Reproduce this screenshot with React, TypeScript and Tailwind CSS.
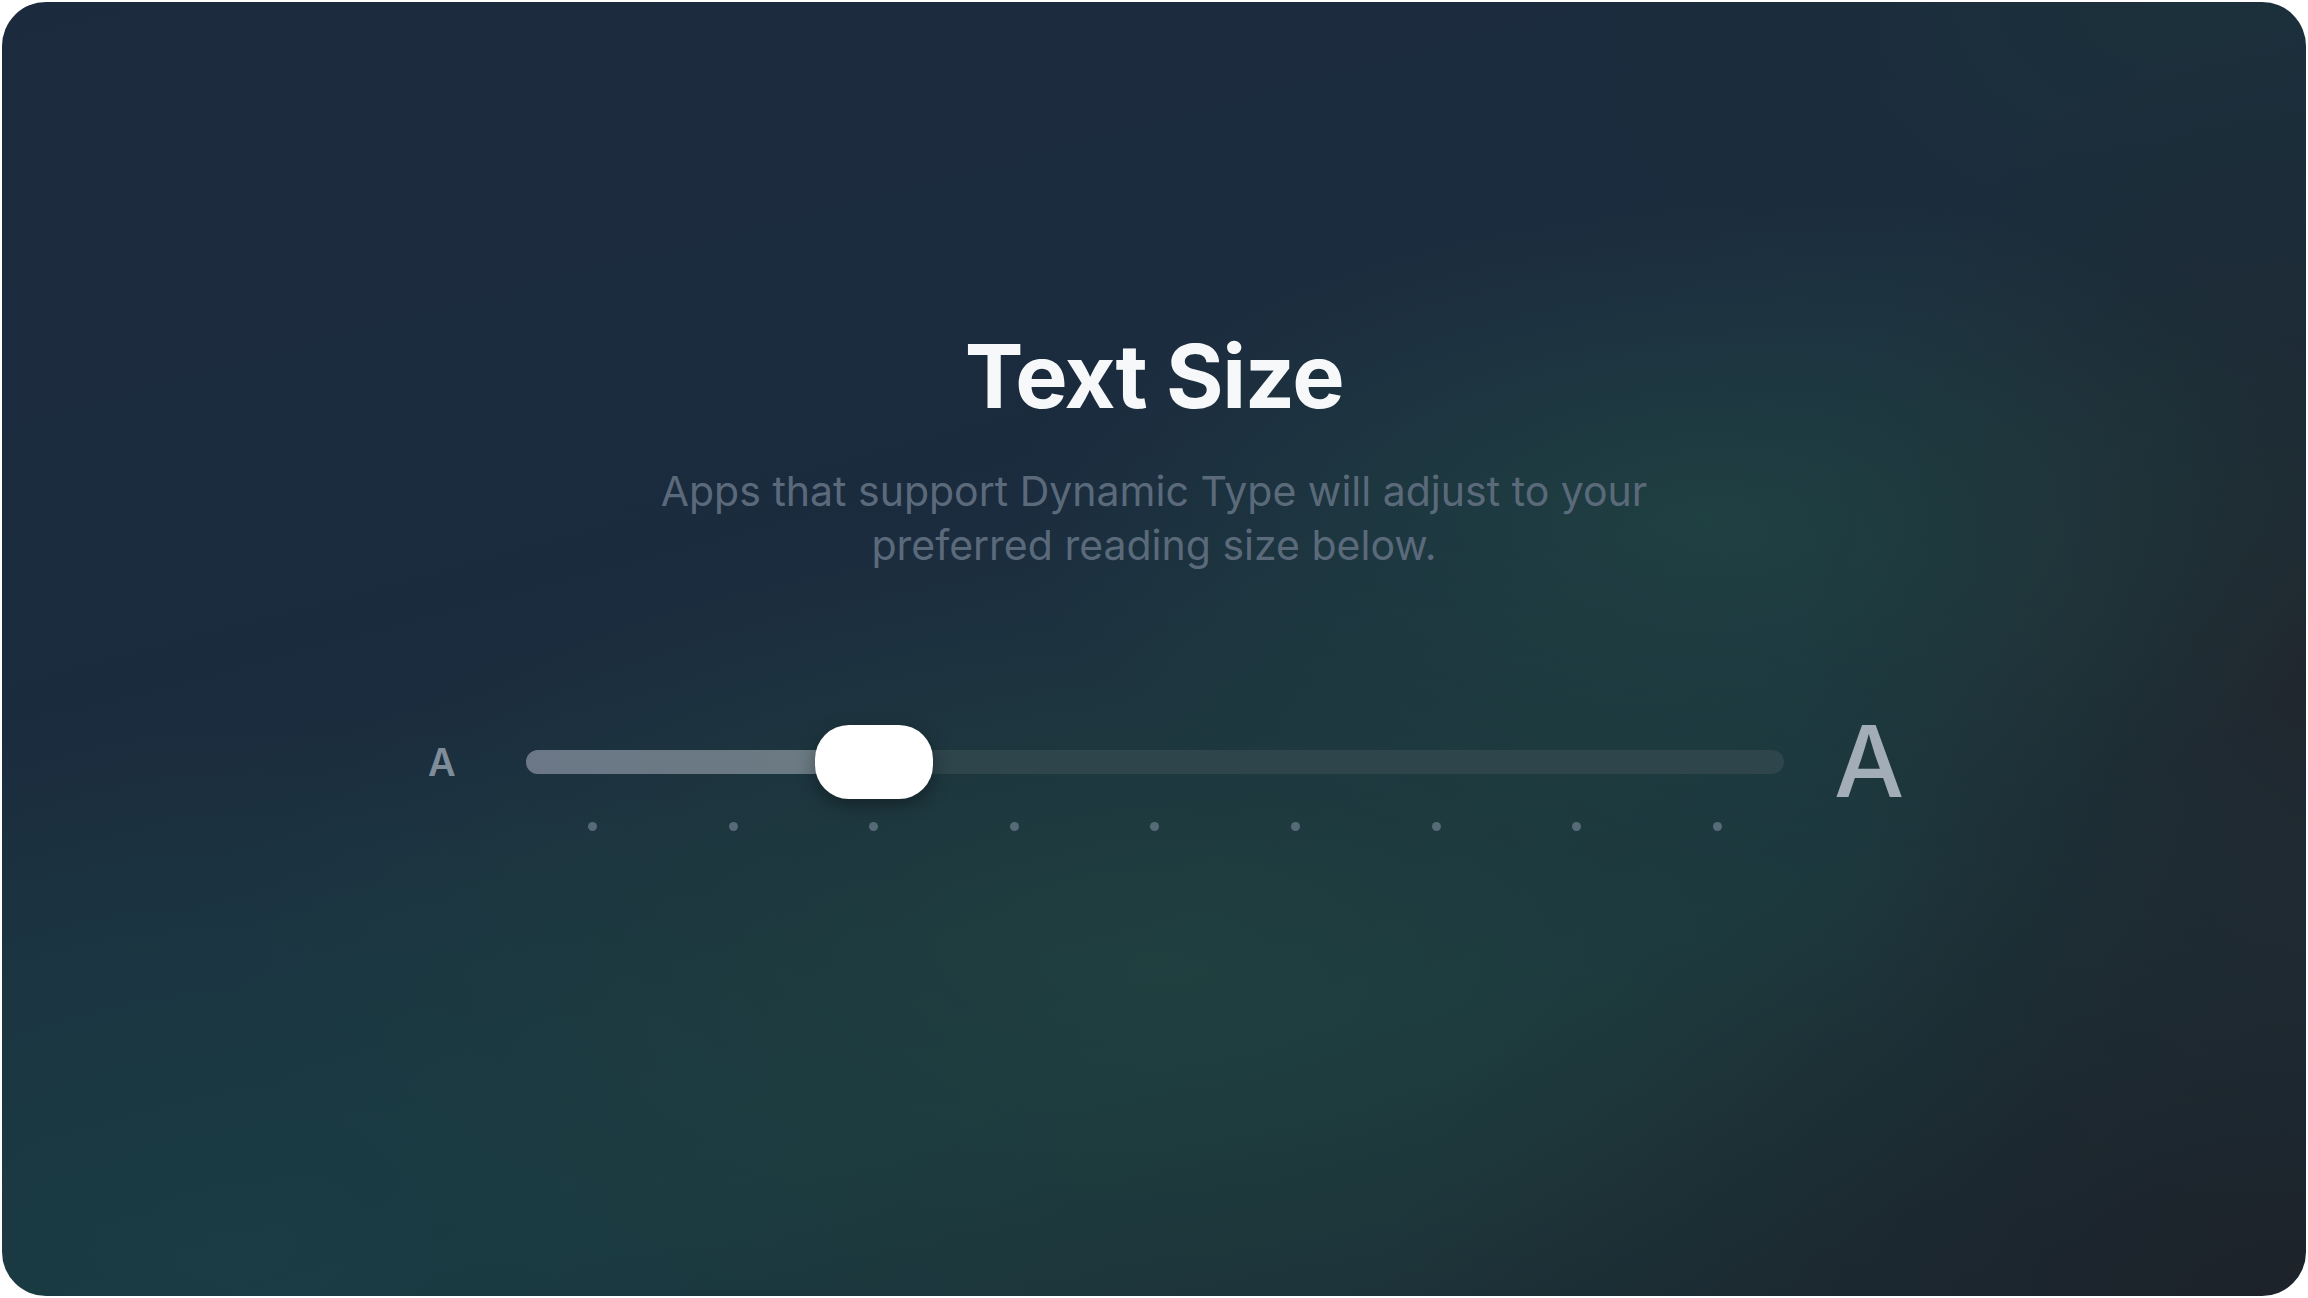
import React from "react";

const stops = [0, 1, 2, 3, 4, 5, 6, 7, 8];

export default function App() {
  return (
    <div className="h-screen w-full bg-white p-[2px] font-['Inter',sans-serif]">
      <div className="relative h-full w-full overflow-hidden rounded-[44px] bg-[#1b2a3d] bg-[image:radial-gradient(ellipse_30%_26%_at_74%_40%,rgba(34,74,68,0.6)_0%,transparent_100%),radial-gradient(ellipse_40%_34%_at_50%_74%,rgba(36,72,64,0.5)_0%,transparent_100%),radial-gradient(ellipse_38%_42%_at_10%_96%,rgba(26,62,70,0.75)_0%,transparent_100%),radial-gradient(ellipse_22%_50%_at_100%_52%,rgba(32,38,46,1)_0%,transparent_100%),radial-gradient(ellipse_40%_40%_at_100%_100%,rgba(28,34,42,0.95)_0%,transparent_100%),radial-gradient(ellipse_30%_35%_at_95%_0%,rgba(27,50,58,0.8)_0%,transparent_100%),linear-gradient(165deg,#1c2a3e_0%,#1b2b3e_38%,#1b373e_72%,#1c2b33_100%)]">
        <div className="flex flex-col items-center pt-[330px]">
          {/* Title */}
          <h1 className="text-[88px] leading-none font-bold tracking-[-0.015em] text-[#f7f8f9]">
            Text Size
          </h1>

          {/* Description */}
          <p className="mt-[44px] max-w-[1040px] text-center text-[41px] leading-[54px] text-[#5b6a7b]">
            Apps that support Dynamic Type will adjust to your preferred reading size below.
          </p>

          {/* Slider */}
          <div className="mt-[140px] grid grid-cols-[auto_1258px_auto] items-center pl-[24px]">
            <span className="mr-[70px] w-[28px] text-[38px] leading-none font-semibold text-[#7f8d9b]">A</span>

            <div className="relative flex h-[74px] items-center">
              <div className="flex h-[24px] w-full overflow-hidden rounded-full bg-[#2e454c]">
                <div className="h-full w-[348px] bg-gradient-to-r from-[#6b7786] to-[#6b7b82]" />
              </div>
              <div className="absolute top-0 left-[289px] h-[74px] w-[118px] rounded-[34px] bg-white shadow-[0_6px_18px_rgba(0,0,0,0.35)]" />
            </div>

            <span className="ml-[50px] text-[99px] leading-none font-medium text-[#a3adb7]">A</span>

            <div />
            <div className="mt-[11px] flex justify-between px-[62px]">
              {stops.map((s) => (
                <div key={s} className="h-[9px] w-[9px] rounded-full bg-[#566a77]" />
              ))}
            </div>
            <div />
          </div>
        </div>
      </div>
    </div>
  );
}
